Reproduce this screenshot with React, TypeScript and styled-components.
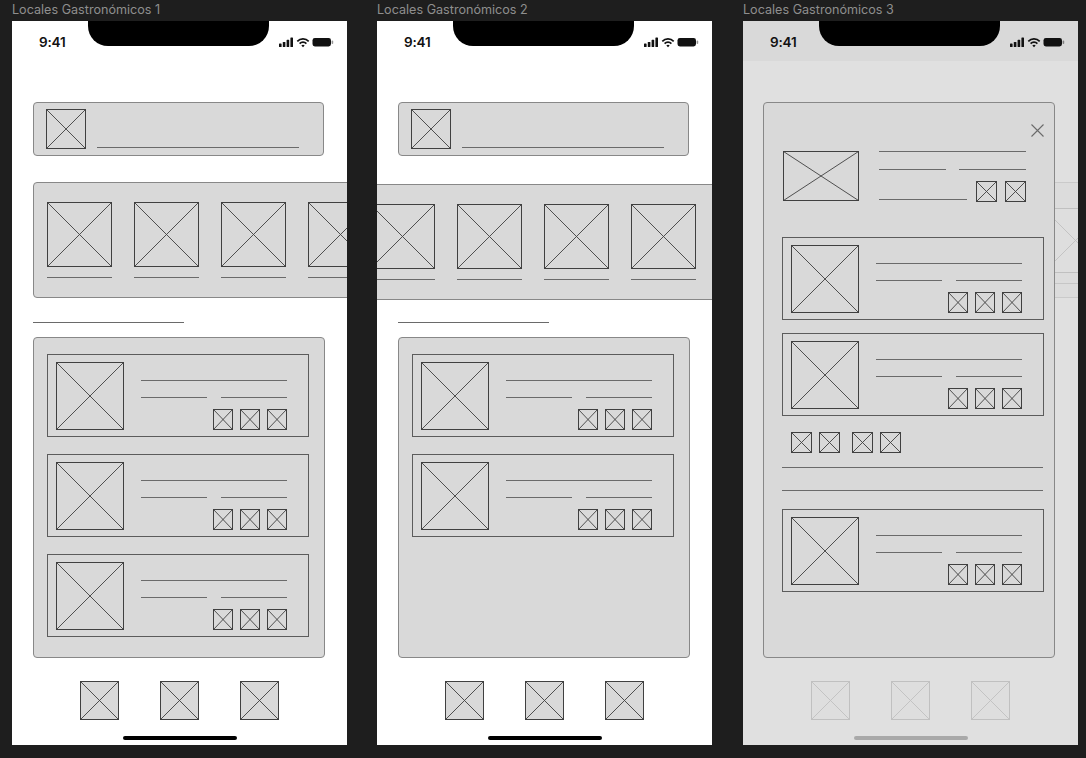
import React from "react";
import styled, { createGlobalStyle } from "styled-components";

const GlobalStyle = createGlobalStyle`
  html, body {
    margin: 0;
    background: #1e1e1e;
  }
  body {
    font-family: Inter, "Liberation Sans", sans-serif;
  }
`;

const LINE = "#6a6a6a";
const SOFT_LINE = "#c6c6c6";

const Canvas = styled.div`
  display: flex;
  gap: 30px;
  padding-left: 12px;
  height: 758px;
  overflow: hidden;
`;

const Column = styled.div`
  display: flex;
  flex-direction: column;
  flex-shrink: 0;

  &:last-child {
    margin-left: 1px;
  }
`;

const FrameLabel = styled.div`
  font-size: 12.6px;
  line-height: 15px;
  color: #8e8e8e;
  padding-top: 2px;
  margin-bottom: 4px;
  white-space: nowrap;
`;

const Phone = styled.div<{ $dim?: boolean }>`
  position: relative;
  width: 335px;
  height: 724px;
  background: ${(p) => (p.$dim ? "#e0e0e0" : "#ffffff")};
  overflow: hidden;
  display: flex;
  flex-direction: column;
`;

const StatusBar = styled.div<{ $dim?: boolean }>`
  position: relative;
  box-sizing: border-box;
  height: 40px;
  flex-shrink: 0;
  display: flex;
  align-items: center;
  justify-content: space-between;
  padding: 2px 13px 0 27px;
  background: ${(p) => (p.$dim ? "#d9d9d9" : "transparent")};
`;

const Clock = styled.span`
  font-size: 13.5px;
  font-weight: 600;
  letter-spacing: -0.2px;
  color: #111;
`;

const Notch = styled.div`
  position: absolute;
  top: 0;
  left: 76px;
  width: 181px;
  height: 25px;
  background: #000;
  border-radius: 0 0 20px 20px;
`;

const PhSvg = styled.svg`
  display: block;
  flex-shrink: 0;
`;

const Rule = styled.div<{ $w: number; $soft?: boolean }>`
  width: ${(p) => p.$w}px;
  height: 1px;
  flex-shrink: 0;
  background: ${(p) => (p.$soft ? SOFT_LINE : LINE)};
`;

const SearchBar = styled.div`
  box-sizing: border-box;
  width: 291px;
  height: 54px;
  flex-shrink: 0;
  margin: 41px 0 0 21px;
  display: flex;
  align-items: flex-start;
  padding: 6px 0 0 12px;
  background: #d9d9d9;
  border: 1px solid #888;
  border-radius: 4px;

  & > ${Rule} {
    margin: 38px 0 0 11px;
  }
`;

const Strip = styled.div<{ $top: number; $bottom: number; $left: number; $pad: number }>`
  box-sizing: border-box;
  align-self: flex-start;
  flex-shrink: 0;
  width: 480px;
  height: 116px;
  margin: ${(p) => p.$top}px 0 ${(p) => p.$bottom}px ${(p) => p.$left}px;
  display: flex;
  gap: 22px;
  padding: 19px 0 0 ${(p) => p.$pad}px;
  background: #d9d9d9;
  border: 1px solid #888;
  border-radius: 4px;
`;

const StripItem = styled.div`
  display: flex;
  flex-direction: column;
  gap: 10px;
`;

const SectionRule = styled(Rule)`
  margin-left: 21px;
`;

const ListPanel = styled.div`
  box-sizing: border-box;
  width: 292px;
  height: 321px;
  flex-shrink: 0;
  margin: 14px 0 0 21px;
  display: flex;
  flex-direction: column;
  gap: 17px;
  padding: 16px 0 0 13px;
  background: #d9d9d9;
  border: 1px solid #888;
  border-radius: 4px;
`;

const Card = styled.div<{ $mt?: number; $ml?: number }>`
  box-sizing: border-box;
  width: 262px;
  height: 83px;
  flex-shrink: 0;
  margin: ${(p) => p.$mt ?? 0}px 0 0 ${(p) => p.$ml ?? 0}px;
  display: flex;
  gap: 17px;
  padding: 7px 0 0 8px;
  border: 1px solid #5c5c5c;
`;

const CardInfo = styled.div`
  width: 146px;
  padding-top: 18px;
  display: flex;
  flex-direction: column;
`;

const SplitRow = styled.div<{ $mt: number }>`
  display: flex;
  justify-content: space-between;
  margin-top: ${(p) => p.$mt}px;
`;

const IconRow = styled.div<{ $mt: number; $gap: number }>`
  display: flex;
  justify-content: flex-end;
  gap: ${(p) => p.$gap}px;
  margin-top: ${(p) => p.$mt}px;
`;

const BottomNav = styled.div`
  display: flex;
  justify-content: center;
  gap: 41px;
  margin-top: 23px;
  flex-shrink: 0;
`;

const HomeBar = styled.div<{ $dim?: boolean }>`
  align-self: center;
  width: 114px;
  height: 4px;
  margin-top: 16px;
  border-radius: 2px;
  flex-shrink: 0;
  background: ${(p) => (p.$dim ? "#a9a9a9" : "#000")};
`;

/* frame 3 */

const Backdrop = styled.div`
  position: absolute;
  top: 161px;
  left: 293px;
  box-sizing: border-box;
  width: 140px;
  height: 116px;
  padding: 25px 0 0 6px;
  background: #dcdcdc;
  border: 1px solid #cacaca;
  border-radius: 4px;
`;

const Modal = styled.div`
  position: relative;
  z-index: 1;
  box-sizing: border-box;
  width: 292px;
  height: 556px;
  flex-shrink: 0;
  margin: 41px 0 0 20px;
  display: flex;
  flex-direction: column;
  background: #d9d9d9;
  border: 1px solid #888;
  border-radius: 4px;
`;

const CloseRow = styled.div`
  display: flex;
  justify-content: flex-end;
  padding: 21px 10px 0 0;
`;

const Detail = styled.div`
  display: flex;
  gap: 20px;
  margin: 14px 0 0 19px;
`;

const DetailInfo = styled.div`
  width: 147px;
  display: flex;
  flex-direction: column;
`;

const DetailFoot = styled.div`
  display: flex;
  align-items: flex-end;
  gap: 8px;
  height: 21px;
  margin-top: 11px;

  & > ${Rule} {
    margin: 0 1px 2px 0;
  }
`;

const Tags = styled.div`
  display: flex;
  gap: 12px;
  margin: 16px 0 0 27px;
`;

const TagPair = styled.div`
  display: flex;
  gap: 7px;
`;

const Divider = styled(Rule)<{ $mt: number }>`
  margin: ${(p) => p.$mt}px 0 0 18px;
`;

type PhProps = { w: number; h: number; soft?: boolean };

const Placeholder = ({ w, h, soft }: PhProps) => {
  const stroke = soft ? "#c0c0c0" : "#404040";
  const fill = soft ? "#dedede" : "#d9d9d9";
  return (
    <PhSvg width={w} height={h} viewBox={`0 0 ${w} ${h}`}>
      <rect x={0.5} y={0.5} width={w - 1} height={h - 1} fill={fill} stroke={stroke} />
      <path
        d={`M0.5 0.5 L${w - 0.5} ${h - 0.5} M${w - 0.5} 0.5 L0.5 ${h - 0.5}`}
        stroke={stroke}
        strokeWidth={0.9}
        fill="none"
      />
    </PhSvg>
  );
};

const StatusIcons = () => (
  <svg width="55" height="12" viewBox="0 0 55 12">
    <rect x="0" y="7.5" width="2.6" height="3.5" rx="0.6" fill="#111" />
    <rect x="3.8" y="6" width="2.6" height="5" rx="0.6" fill="#111" />
    <rect x="7.6" y="3.8" width="2.6" height="7.2" rx="0.6" fill="#111" />
    <rect x="11.4" y="1.5" width="2.6" height="9.5" rx="0.6" fill="#111" />
    <path d="M18.3 5.3 A8 8 0 0 1 29.7 5.3" stroke="#111" strokeWidth="1.7" fill="none" />
    <path d="M20.6 7.6 A4.8 4.8 0 0 1 27.4 7.6" stroke="#111" strokeWidth="1.7" fill="none" />
    <path d="M24 11.2 L22.3 9.5 A2.4 2.4 0 0 1 25.7 9.5 Z" fill="#111" />
    <rect x="33.5" y="2" width="18.5" height="8.5" rx="2.4" fill="#111" />
    <rect x="52.6" y="4.6" width="1.6" height="3.4" rx="0.8" fill="#111" opacity="0.45" />
  </svg>
);

const CloseIcon = () => (
  <svg width="13" height="13" viewBox="0 0 13 13">
    <path d="M0.5 0.5 L12.5 12.5 M12.5 0.5 L0.5 12.5" stroke="#6a6a6a" strokeWidth="1.1" />
  </svg>
);

const PhoneFrame = ({
  label,
  dim,
  children,
}: {
  label: string;
  dim?: boolean;
  children: React.ReactNode;
}) => (
  <Column>
    <FrameLabel>{label}</FrameLabel>
    <Phone $dim={dim}>
      <StatusBar $dim={dim}>
        <Clock>9:41</Clock>
        <StatusIcons />
        <Notch />
      </StatusBar>
      {children}
      <BottomNav>
        {[0, 1, 2].map((i) => (
          <Placeholder key={i} w={39} h={39} soft={dim} />
        ))}
      </BottomNav>
      <HomeBar $dim={dim} />
    </Phone>
  </Column>
);

const PlaceCard = ({ mt, ml }: { mt?: number; ml?: number }) => (
  <Card $mt={mt} $ml={ml}>
    <Placeholder w={68} h={68} />
    <CardInfo>
      <Rule $w={146} />
      <SplitRow $mt={16}>
        <Rule $w={66} />
        <Rule $w={66} />
      </SplitRow>
      <IconRow $mt={11} $gap={7}>
        {[0, 1, 2].map((i) => (
          <Placeholder key={i} w={20} h={21} />
        ))}
      </IconRow>
    </CardInfo>
  </Card>
);

const Carousel = ({
  top,
  bottom,
  left,
  pad,
}: {
  top: number;
  bottom: number;
  left: number;
  pad: number;
}) => (
  <Strip $top={top} $bottom={bottom} $left={left} $pad={pad}>
    {[0, 1, 2, 3, 4].map((i) => (
      <StripItem key={i}>
        <Placeholder w={65} h={65} />
        <Rule $w={65} />
      </StripItem>
    ))}
  </Strip>
);

const Search = () => (
  <SearchBar>
    <Placeholder w={40} h={40} />
    <Rule $w={202} />
  </SearchBar>
);

const Screen1 = () => (
  <PhoneFrame label="Locales Gastronómicos 1">
    <Search />
    <Carousel top={26} bottom={24} left={21} pad={13} />
    <SectionRule $w={151} />
    <ListPanel>
      <PlaceCard />
      <PlaceCard />
      <PlaceCard />
    </ListPanel>
  </PhoneFrame>
);

const Screen2 = () => (
  <PhoneFrame label="Locales Gastronómicos 2">
    <Search />
    <Carousel top={28} bottom={22} left={-20} pad={12} />
    <SectionRule $w={151} />
    <ListPanel>
      <PlaceCard />
      <PlaceCard />
    </ListPanel>
  </PhoneFrame>
);

const Screen3 = () => (
  <PhoneFrame label="Locales Gastronómicos 3" dim>
    <Backdrop>
      <StripItem>
        <Placeholder w={65} h={65} soft />
        <Rule $w={65} $soft />
      </StripItem>
    </Backdrop>
    <Modal>
      <CloseRow>
        <CloseIcon />
      </CloseRow>
      <Detail>
        <Placeholder w={76} h={50} />
        <DetailInfo>
          <Rule $w={147} />
          <SplitRow $mt={17}>
            <Rule $w={67} />
            <Rule $w={67} />
          </SplitRow>
          <DetailFoot>
            <Rule $w={88} />
            <Placeholder w={21} h={21} />
            <Placeholder w={21} h={21} />
          </DetailFoot>
        </DetailInfo>
      </Detail>
      <PlaceCard mt={35} ml={18} />
      <PlaceCard mt={13} ml={18} />
      <Tags>
        {[0, 1].map((g) => (
          <TagPair key={g}>
            <Placeholder w={21} h={21} />
            <Placeholder w={21} h={21} />
          </TagPair>
        ))}
      </Tags>
      <Divider $w={261} $mt={14} />
      <Divider $w={261} $mt={22} />
      <PlaceCard mt={18} ml={18} />
    </Modal>
  </PhoneFrame>
);

export default function App() {
  return (
    <>
      <GlobalStyle />
      <Canvas>
        <Screen1 />
        <Screen2 />
        <Screen3 />
      </Canvas>
    </>
  );
}
